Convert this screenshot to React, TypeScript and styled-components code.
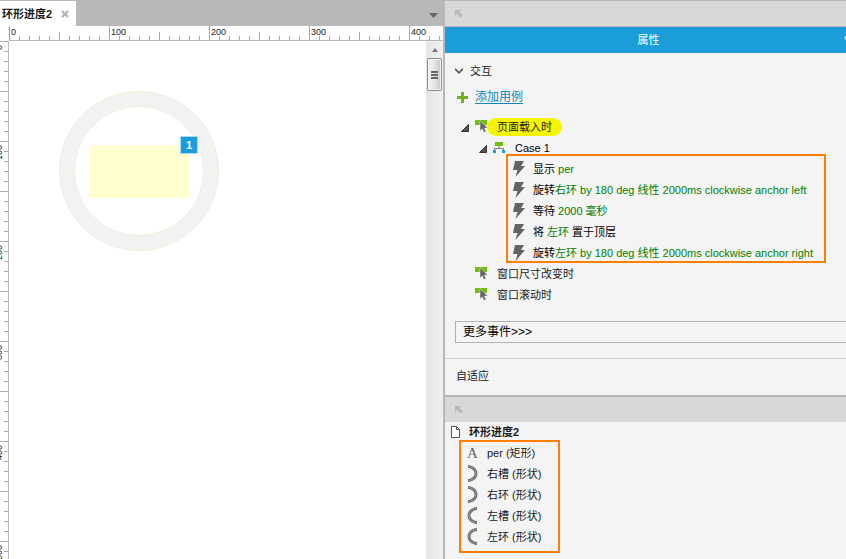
import React, { useState } from "react";
import styled, { createGlobalStyle, css } from "styled-components";

const line = "#b8b8b8";
const orange = "#ff8000";
const blue = "#1b9dd9";
const green = "#008000";

const GlobalStyle = createGlobalStyle`
  * { box-sizing: border-box; }
  body {
    margin: 0;
    color: #1a1a1a;
    background: #f4f4f4;
    font: 11px/20px "Liberation Sans", "Noto Sans CJK SC", sans-serif;
  }
  button { font: inherit; color: inherit; background: none; border: 0; padding: 0; cursor: pointer; }
  ul { margin: 0; padding: 0; list-style: none; }
  svg { display: block; flex: none; }
`;

const Workspace = styled.div`
  display: flex;
  height: 100vh;
  overflow: hidden;
`;

/* Editor side */

const Editor = styled.main`
  flex: 1;
  min-width: 0;
  display: flex;
  flex-direction: column;
  background: #fff;
`;

const TabBar = styled.div`
  display: flex;
  justify-content: space-between;
  height: 26px;
  padding-top: 1px;
  background: ${line};
`;

const Tab = styled.div`
  display: flex;
  align-items: center;
  gap: 9px;
  width: 76px;
  padding-left: 2px;
  background: #fff;
  font-weight: bold;
  white-space: nowrap;
`;

const TabMenu = styled.button`
  display: flex;
  align-items: center;
  padding: 4px 5px 0;
`;

const HRuler = styled.div`
  display: flex;
  flex: none;
  height: 15px;
  padding-left: 9px;
  overflow: hidden;
`;

const HMark = styled.div`
  flex: none;
  width: 100px;
  padding-left: 2px;
  font-size: 9px;
  line-height: 12px;
  color: #222;
  background:
    linear-gradient(#aaa, #aaa) 0 0 / 1px 15px no-repeat,
    linear-gradient(#aaa, #aaa) 50px 6px / 1px 9px no-repeat,
    linear-gradient(${line}, ${line}) 0 14px / 100px 1px no-repeat,
    repeating-linear-gradient(90deg, #aaa 0 1px, transparent 1px 10px) 0 10px / 100px 5px no-repeat;
`;

const Stage = styled.div`
  flex: 1;
  min-height: 0;
  display: flex;
`;

const VRuler = styled.div`
  flex: none;
  width: 9px;
  overflow: hidden;
  border-right: 1px solid ${line};
`;

const VMark = styled.div`
  display: flex;
  justify-content: flex-end;
  height: 100px;
  padding: 4px 4px 0 0;
  font-size: 9px;
  line-height: 10px;
  color: #222;
  background:
    repeating-linear-gradient(#aaa 0 1px, transparent 1px 50px),
    repeating-linear-gradient(#aaa 0 1px, transparent 1px 10px) 4px 0 / 4px 100px no-repeat;

  span {
    height: min-content;
    writing-mode: vertical-rl;
    transform: rotate(180deg);
  }
`;

const Canvas = styled.div`
  position: relative;
  flex: 1;
  min-width: 0;
  overflow: hidden;
`;

const Ring = styled.div`
  position: absolute;
  left: 50px;
  top: 50px;
  width: 160px;
  height: 160px;
  border-radius: 50%;
  border: 1px solid #f8ecd8;
  background: #f2f2f2;

  &::after {
    content: "";
    position: absolute;
    inset: 14px;
    border-radius: 50%;
    border: 1px solid #f8ecd8;
    background: #fff;
  }
`;

const PlaceholderBox = styled.div`
  position: absolute;
  left: 80px;
  top: 104px;
  width: 100px;
  height: 53px;
  background: #ffffcf;
`;

const Note = styled.button`
  position: absolute;
  right: -9px;
  top: -9px;
  width: 18px;
  height: 18px;
  border: 1px solid #a4dcf2;
  background: ${blue};
  color: #fff;
  font-weight: bold;
  line-height: 16px;
`;

const ScrollBar = styled.div`
  flex: none;
  display: flex;
  flex-direction: column;
  align-items: center;
  width: 17px;
  background: linear-gradient(90deg, #e6e6e6, #f0f0f0);
`;

const ScrollArrow = styled.button`
  display: grid;
  place-items: center;
  width: 17px;
  height: 17px;
`;

const ScrollThumb = styled.div`
  display: grid;
  place-items: center;
  width: 15px;
  height: 33px;
  border: 1px solid #8f8f8f;
  border-radius: 2px;
  background: linear-gradient(90deg, #f6f6f6, #e4e4e4 50%, #c6c6c6);
  box-shadow: inset 0 0 0 1px #f2f2f2;
`;

/* Inspector side */

const Inspector = styled.aside`
  flex: none;
  display: flex;
  flex-direction: column;
  width: 403px;
  border-left: 2px solid ${line};
  background: #f4f4f4;
  overflow: hidden;
`;

const Strip = styled.div<{ $top?: boolean }>`
  display: flex;
  align-items: center;
  height: 25px;
  flex: none;
  box-sizing: content-box;
  padding-left: 10px;
  background: #d8d8d8;
  ${(p) =>
    p.$top
      ? css`border-top: 1px solid ${line}; border-bottom: 1px solid ${line};`
      : css`border-top: 2px solid ${line};`}
`;

const PanelTitle = styled.h2`
  display: grid;
  grid-template-columns: 8px 1fr 2px;
  align-items: center;
  height: 26px;
  margin: 0;
  background: ${blue};
  color: #fff;
  font-size: 11px;
  font-weight: normal;
  text-align: center;

  span { grid-column: 2; }
`;

const Section = styled.section`
  padding: 8px 0 15px 10px;
`;

const SectionToggle = styled.button`
  display: flex;
  align-items: center;
  gap: 7px;
  height: 20px;
`;

const AddCase = styled.div`
  display: flex;
  align-items: center;
  gap: 7px;
  height: 20px;
  margin: 6px 0 9px 2px;
  font-size: 12px;

  a {
    color: #1088bd;
    text-underline-offset: 2px;
  }
`;

const Row = styled.div<{ $indent: number; $gap: number }>`
  display: flex;
  align-items: center;
  gap: ${(p) => p.$gap}px;
  height: 21px;
  padding-left: ${(p) => p.$indent}px;
  white-space: nowrap;
`;

const Twisty = styled.button`
  display: flex;
  padding-top: 2px;
`;

const Highlight = styled.span`
  height: 18px;
  margin-left: -10px;
  padding: 0 10px;
  border-radius: 9px;
  background: #f5f500;
  line-height: 18px;
`;

const Frame = styled.div<{ $box: string }>`
  position: relative;

  &::after {
    content: "";
    position: absolute;
    inset: ${(p) => p.$box};
    border: 2px solid ${orange};
    pointer-events: none;
  }
`;

const ActionText = styled.span`
  color: #000;
  white-space: pre;

  em {
    font-style: normal;
    color: ${green};
  }
`;

const MoreEvents = styled.button`
  display: block;
  width: 100%;
  height: 22px;
  margin-top: 16px;
  padding-left: 7px;
  border: 1px solid #b3b3b3;
  border-right: 0;
  font-size: 12px;
  text-align: left;
  color: #000;
`;

const Adaptive = styled.section`
  height: 37px;
  flex: none;
  padding-left: 11px;
  border-top: 1px solid #d0d0d0;
  line-height: 34px;
`;

const OutlineTitle = styled.div`
  display: flex;
  align-items: center;
  gap: 9px;
  height: 20px;
  padding-left: 6px;
  font-weight: bold;
`;

const PinIcon = () => (
  <svg width="8" height="8" viewBox="0 0 8 8">
    <path d="M0 0h6L4.200 1.800 8 5.600 6 7.600 2 3.800 0 6z" fill="#b8b8b8" />
  </svg>
);

const TwistyIcon = () => (
  <svg width="8" height="8" viewBox="0 0 8 8">
    <path d="M7.500.5v7h-7z" fill="#555" stroke="#333" />
  </svg>
);

const EventIcon = () => (
  <svg width="13" height="16" viewBox="0 0 13 16">
    <path d="M0 1h12v5H0z" fill="#72bf0a" />
    <path d="M5 1.500v10.500l2.300-2.100 1.500 3.600 2.200-.9-1.500-3.500 3.300-.2z" fill="#666" stroke="#f4f4f4" strokeWidth=".5" />
  </svg>
);

const CaseIcon = () => (
  <svg width="12" height="12" viewBox="0 0 12 12">
    <path d="M2 0h8v4H2z" fill="#72bf0a" />
    <path d="M6 4v3M1.500 9V6.500h9V9" fill="none" stroke="#777" />
    <path d="M0 8h3v3H0zM9 8h3v3H9z" fill={blue} />
  </svg>
);

const BoltIcon = () => (
  <svg width="12" height="16" viewBox="0 0 12 16">
    <path d="M2 0h9L8 5h4L2.500 16l2-7H0z" fill="#636363" />
  </svg>
);

const ArcIcon = ({ left }: { left?: boolean }) => (
  <svg width="11" height="17" viewBox="0 0 11 17" fill="none">
    <g transform={left ? "translate(11 0) scale(-1 1)" : undefined}>
      <path d="M1 1.500C3 1.500 9 3 9 8.500S3 15.500 1 15.500" stroke="#666" strokeWidth="2.800" />
      <path d="M1.600 1.600C3.500 1.700 9 3.200 9 8.500S3.500 15.300 1.600 15.400" stroke="#b2b2b2" strokeWidth=".8" />
    </g>
  </svg>
);

const LetterIcon = styled.span`
  width: 11px;
  color: #666;
  font: 15px/20px "Liberation Serif", serif;
`;

const PageIcon = () => (
  <svg width="9" height="12" viewBox="0 0 9 12" fill="#fff" stroke="#555">
    <path d="M.5.5h5l3 3v8h-8zM5.500.5v3h3" />
  </svg>
);

type Part = string | { value: string };

const actions: Part[][] = [
  ["显示 ", { value: "per" }],
  ["旋转", { value: "右环 by 180 deg 线性 2000ms clockwise anchor left" }],
  ["等待 ", { value: "2000 毫秒" }],
  ["将 ", { value: "左环" }, " 置于顶层"],
  ["旋转", { value: "左环 by 180 deg 线性 2000ms clockwise anchor right" }],
];

const widgets = [
  { name: "per (矩形)", icon: <LetterIcon aria-hidden="true">A</LetterIcon> },
  { name: "右槽 (形状)", icon: <ArcIcon /> },
  { name: "右环 (形状)", icon: <ArcIcon /> },
  { name: "左槽 (形状)", icon: <ArcIcon left /> },
  { name: "左环 (形状)", icon: <ArcIcon left /> },
];

const columnMarks = [0, 100, 200, 300, 400];
const rowMarks = [0, 100, 200, 300, 400, 500];

export default function App() {
  const [sectionOpen, setSectionOpen] = useState(true);
  const [eventOpen, setEventOpen] = useState(true);
  const [caseOpen, setCaseOpen] = useState(true);

  return (
    <Workspace>
      <GlobalStyle />
      <Editor>
        <TabBar>
          <Tab>
            环形进度2
            <button aria-label="关闭">
              <svg width="8" height="8" viewBox="0 0 8 8" stroke="#b4b4b4" strokeWidth="2.400">
                <path d="M1 1l6 6M7 1L1 7" />
              </svg>
            </button>
          </Tab>
          <TabMenu aria-label="标签列表">
            <svg width="9" height="5" viewBox="0 0 9 5">
              <path d="M0 0h9L4.500 5z" fill="#666" />
            </svg>
          </TabMenu>
        </TabBar>
        <HRuler>
          {columnMarks.map((m) => (
            <HMark key={m}>{m}</HMark>
          ))}
        </HRuler>
        <Stage>
          <VRuler>
            {rowMarks.map((m) => (
              <VMark key={m}>
                <span>{m}</span>
              </VMark>
            ))}
          </VRuler>
          <Canvas>
            <Ring />
            <PlaceholderBox>
              <Note>1</Note>
            </PlaceholderBox>
          </Canvas>
          <ScrollBar>
            <ScrollArrow aria-label="向上滚动">
              <svg width="6" height="4" viewBox="0 0 6 4">
                <path d="M3 0l3 4H0z" fill="#777" />
              </svg>
            </ScrollArrow>
            <ScrollThumb>
              <svg width="7" height="8" viewBox="0 0 7 8">
                <path d="M0 0h7v2H0zM0 3h7v2H0zM0 6h7v2H0z" fill="#666" />
              </svg>
            </ScrollThumb>
          </ScrollBar>
        </Stage>
      </Editor>

      <Inspector>
        <Strip $top>
          <PinIcon />
        </Strip>
        <PanelTitle>
          <span>属性</span>
          <svg width="6" height="8" viewBox="0 0 6 8" stroke="#a8e4f8">
            <path d="M0 1.500h6M1.500 0v4" />
          </svg>
        </PanelTitle>
        <Section>
          <SectionToggle aria-expanded={sectionOpen} onClick={() => setSectionOpen(!sectionOpen)}>
            <svg width="8" height="6" viewBox="0 0 8 6" fill="none" stroke="#555" strokeWidth="1.600">
              <path d="M0 .8L4 4.800 8 .8" />
            </svg>
            交互
          </SectionToggle>
          {sectionOpen && (
            <>
              <AddCase>
                <svg width="11" height="11" viewBox="0 0 11 11" stroke="#72b026" strokeWidth="3">
                  <path d="M5.500 0v11M0 5.500h11" />
                </svg>
                <a href="#add-case">添加用例</a>
              </AddCase>
              <ul>
                <li>
                  <Row $indent={6} $gap={6}>
                    <Twisty aria-label="页面载入时" aria-expanded={eventOpen} onClick={() => setEventOpen(!eventOpen)}>
                      <TwistyIcon />
                    </Twisty>
                    <Row as="span" $indent={0} $gap={9}>
                      <EventIcon />
                      <Highlight>页面载入时</Highlight>
                    </Row>
                  </Row>
                  {eventOpen && (
                    <>
                      <Row $indent={24} $gap={6}>
                        <Twisty aria-label="Case 1" aria-expanded={caseOpen} onClick={() => setCaseOpen(!caseOpen)}>
                          <TwistyIcon />
                        </Twisty>
                        <Row as="span" $indent={0} $gap={10}>
                          <CaseIcon />
                          <ActionText>Case 1</ActionText>
                        </Row>
                      </Row>
                      {caseOpen && (
                        <Frame $box="-4px 20px 0 51px">
                          <ul>
                            {actions.map((parts, i) => (
                              <li key={i}>
                                <Row $indent={58} $gap={8}>
                                  <BoltIcon />
                                  <ActionText>
                                    {parts.map((p, j) => (typeof p === "string" ? p : <em key={j}>{p.value}</em>))}
                                  </ActionText>
                                </Row>
                              </li>
                            ))}
                          </ul>
                        </Frame>
                      )}
                    </>
                  )}
                </li>
                {["窗口尺寸改变时", "窗口滚动时"].map((name) => (
                  <li key={name}>
                    <Row $indent={20} $gap={9}>
                      <EventIcon />
                      {name}
                    </Row>
                  </li>
                ))}
              </ul>
              <MoreEvents>更多事件&gt;&gt;&gt;</MoreEvents>
            </>
          )}
        </Section>
        <Adaptive>自适应</Adaptive>
        <Strip>
          <PinIcon />
        </Strip>
        <OutlineTitle>
          <PageIcon />
          环形进度2
        </OutlineTitle>
        <Frame $box="-2px 286px -6px 14px">
          <ul>
            {widgets.map((w) => (
              <li key={w.name}>
                <Row $indent={22} $gap={9}>
                  {w.icon}
                  {w.name}
                </Row>
              </li>
            ))}
          </ul>
        </Frame>
      </Inspector>
    </Workspace>
  );
}
